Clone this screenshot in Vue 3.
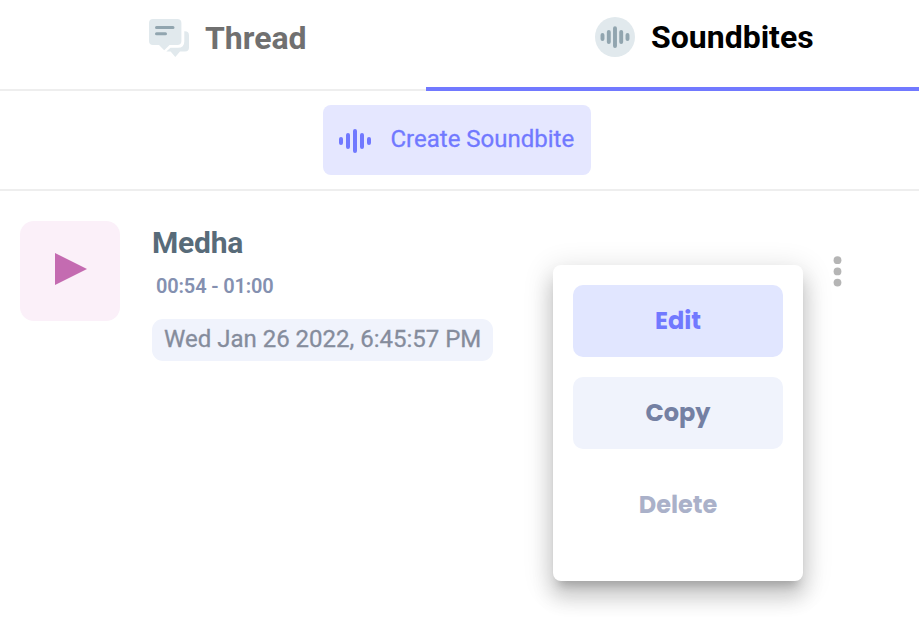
<template>
  <div class="page">
    <div class="tabs">
      <div class="tab thread">
        <svg width="42" height="40" viewBox="0 0 42 40">
          <path d="M18.300 32.600 L22.500 28.800 H30 Q36.300 28.800 36.300 22.500 V12.300 Q41 12 41 16.500 V28.500 Q41 32.600 37 32.600 H32 L27.300 38 L22.600 32.600 Z" fill="#e1e9ed" />
          <path d="M5 0 H29.300 Q33.400 0 33.400 4 V22 Q33.400 26 29.300 26 H21.500 L16.200 31.200 L11 26 H5 Q1 26 1 22 V4 Q1 0 5 0 Z" fill="#e1e9ed" />
          <path d="M8.500 8.500 H25 M8.500 14.700 H17.500" stroke="#91a5af" stroke-width="3" stroke-linecap="round" />
        </svg>
        <span class="thread-text">Thread</span>
      </div>
      <div class="tab sound active">
        <svg width="40" height="40" viewBox="0 0 40 40">
          <circle cx="20" cy="20" r="20" fill="#e1e9ed" />
          <path d="M7.500 18 V22 M13.800 15 V25 M20 11.200 V29 M26.200 15 V25 M32.500 18 V22" stroke="#91a5af" stroke-width="3.900" stroke-linecap="round" />
        </svg>
        <span class="sound-text">Soundbites</span>
      </div>
    </div>

    <div class="create-row">
      <button class="create-btn">
        <svg width="32" height="24" viewBox="0 0 32 24">
          <path d="M2 10 V14 M9 6 V18 M16 2 V22 M23 6 V18 M30 10 V14" stroke="#7179ff" stroke-width="4" stroke-linecap="round" />
        </svg>
        <span>Create Soundbite</span>
      </button>
    </div>

    <div class="item">
      <div class="play">
        <svg width="32" height="32" viewBox="0 0 32 32">
          <path d="M0 0 L32 16 L0 32 Z" fill="#c46bb1" />
        </svg>
      </div>
      <div class="info">
        <div class="name">{{ item.name }}</div>
        <div class="time">{{ item.time }}</div>
        <div class="date"><span>{{ item.date }}</span></div>
      </div>
      <svg class="more" width="10" height="32" viewBox="0 0 10 32">
        <circle v-for="n in 3" :key="n" cx="4.500" :cy="n * 11.200 - 7" r="3.900" fill="#b5b5b5" />
      </svg>
    </div>

    <!-- menu -->
    <div class="menu">
      <button v-for="m in menus" :key="m.text" class="menu-btn" :class="m.type">
        <span>{{ m.text }}</span>
      </button>
    </div>
  </div>
</template>

<script setup>
const item = {
  name: 'Medha',
  time: '00:54 - 01:00',
  date: 'Wed Jan 26 2022, 6:45:57 PM',
}

const menus = [
  { text: 'Edit', type: 'edit' },
  { text: 'Copy', type: 'copy' },
  { text: 'Delete', type: 'delete' },
]
</script>

<style>
body {
  margin: 0;
  background: #fff;
}
</style>

<style scoped>
.page {
  position: relative;
  width: 919px;
  height: 618px;
  overflow: hidden;
  background: #fff;
  font-family: Roboto, "Liberation Sans", sans-serif;
}

svg {
  display: block;
  flex: none;
}

span {
  white-space: nowrap;
}

button {
  border: none;
  padding: 0;
  font-family: inherit;
  cursor: pointer;
}

.tabs {
  display: flex;
  height: 91px;
}

.tab {
  display: flex;
  align-items: flex-start;
  box-sizing: border-box;
  font-size: 32px;
  line-height: 38px;
  font-weight: 700;
}

.thread {
  width: 426px;
  padding: 19px 0 0 148px;
  border-bottom: 2px solid #eee;
  color: #707070;
}

.sound {
  width: 493px;
  padding: 17px 0 0 169px;
  border-bottom: 4px solid #7179ff;
  color: #000;
}

.thread-text {
  margin-left: 15px;
}

.sound-text {
  margin-left: 16px;
  margin-top: 1px;
}

.create-row {
  height: 84px;
  padding-top: 14px;
  border-bottom: 2px solid #eee;
}

.create-btn {
  display: flex;
  align-items: center;
  width: 268px;
  height: 70px;
  margin-left: 323px;
  padding: 0 0 0 16px;
  box-sizing: border-box;
  border-radius: 8px;
  background: #e5e7ff;
  color: #7179ff;
  font-size: 24px;
  line-height: 30px;
  -webkit-text-stroke: 0.3px #7179ff;
}

.create-btn svg {
  margin-top: 2px;
}

.create-btn span {
  margin-left: 19.5px;
  margin-top: -2px;
}

.item {
  display: flex;
  padding: 30px 0 0 20px;
}

.play {
  display: flex;
  align-items: center;
  justify-content: center;
  width: 100px;
  height: 100px;
  box-sizing: border-box;
  padding: 0 0 4px 2px;
  border-radius: 14px;
  background: #fbf0f9;
}

.info {
  width: 681px;
  margin-left: 32px;
}

.name {
  margin-top: 4px;
  font-size: 30px;
  line-height: 36px;
  font-weight: 700;
  letter-spacing: -0.2px;
  color: #586b79;
}

.time {
  margin: 13px 0 0 4px;
  font-size: 20px;
  line-height: 24px;
  font-weight: 600;
  letter-spacing: -0.15px;
  color: #8490b0;
}

.date {
  display: flex;
  align-items: center;
  width: 341px;
  height: 42px;
  margin-top: 21px;
  padding: 0 0 2px 12px;
  box-sizing: border-box;
  border-radius: 11px;
  background: #f0f3fc;
  font-size: 24px;
  color: #858c9c;
  -webkit-text-stroke: 0.3px #858c9c;
}

.more {
  margin-top: 35px;
}

.menu {
  position: absolute;
  left: 553px;
  top: 265px;
  width: 250px;
  height: 316px;
  padding: 20px;
  box-sizing: border-box;
  border-radius: 8px;
  background: #fff;
  box-shadow: 0 10px 10px -6px rgba(0, 0, 0, 0.2), 0 16px 20px 2px rgba(0, 0, 0, 0.14), 0 6px 28px 4px rgba(0, 0, 0, 0.12);
}

.menu-btn {
  display: flex;
  align-items: center;
  justify-content: center;
  width: 210px;
  height: 72px;
  margin-bottom: 20px;
  padding-bottom: 2px;
  border-radius: 10px;
  font-family: Poppins, Inter, "Open Sans", sans-serif;
  font-size: 24px;
  font-weight: 700;
}

.edit {
  background: #e1e6ff;
  color: #7179ff;
}

.copy {
  background: #f0f3fc;
  color: #7480a3;
}

.delete {
  background: #fff;
  color: #aab1c9;
}
</style>
